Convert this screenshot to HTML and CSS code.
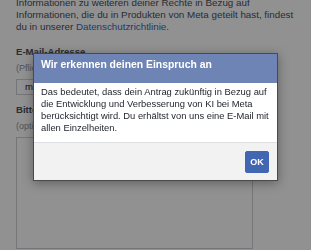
FILE: index.html
```html
<!DOCTYPE html>
<html lang="de">
<head>
<meta charset="utf-8">
<title>Einspruch</title>
<link rel="stylesheet" href="styles.css">
</head>
<body>
<main class="page">
  <p class="intro">Informationen zu weiteren deiner Rechte in Bezug auf Informationen, die du in Produkten von Meta geteilt hast, findest du in unserer <a class="link" href="#">Datenschutzrichtlinie</a>.</p>
  <div class="field">
    <label class="label">E-Mail-Adresse</label>
    <div class="hint">(Pflichtfeld)</div>
    <div class="input">max.mustermann@example.com</div>
  </div>
  <div class="field">
    <label class="label">Bitte erkläre, wie sich das auswirkt.</label>
    <div class="hint">(optional)</div>
    <div class="textarea"></div>
  </div>
</main>
<div class="overlay"></div>
<div class="dialog" role="dialog">
  <div class="dialog-header">Wir erkennen deinen Einspruch an</div>
  <div class="dialog-body">Das bedeutet, dass dein Antrag zukünftig in Bezug auf die Entwicklung und Verbesserung von KI bei Meta berücksichtigt wird. Du erhältst von uns eine E-Mail mit allen Einzelheiten.</div>
  <div class="dialog-footer"><button class="btn-ok">OK</button></div>
</div>
</body>
</html>
```
FILE: styles.css
```css
html, body {
  margin: 0;
  padding: 0;
  background: #ffffff;
  overflow: hidden;
  height: 250px;
}
body {
  font-family: "Liberation Sans", Arial, sans-serif;
  color: #4b4f56;
}
.page {
  padding: 0 16px;
  margin-top: -3px;
  width: 280px;
}
.intro {
  margin: 0;
  font-size: 9.8px;
  line-height: 12px;
}
.link {
  color: #4267b2;
  text-decoration: none;
}
.field {
  display: flex;
  flex-direction: column;
  width: 237px;
}
.field:first-of-type {
  margin-top: 13px;
}
.label {
  font-weight: bold;
  font-size: 9.6px;
  line-height: 12px;
  white-space: nowrap;
  overflow: hidden;
  color: #4b4f56;
}
.hint {
  font-size: 9px;
  line-height: 12px;
  margin-top: 4px;
  color: #90949c;
}
.input {
  margin-top: 5px;
  height: 14px;
  border: 1px solid #ccd0d5;
  font-size: 9.6px;
  line-height: 14px;
  padding: 0 8px;
  color: #1d2129;
  white-space: nowrap;
  overflow: hidden;
}
.field + .field {
  margin-top: 9px;
}
.textarea {
  margin-top: 5px;
  height: 110px;
  border: 1px solid #ccd0d5;
}
.overlay {
  position: fixed;
  inset: 0;
  background: rgba(0, 0, 0, 0.43);
}
.dialog {
  position: absolute;
  left: 33px;
  top: 53px;
  width: 243px;
  border: 1px solid #4a4a4a;
  background: #ffffff;
  box-shadow: 0 2px 10px rgba(0, 0, 0, 0.35);
}
.dialog-header {
  height: 29px;
  box-sizing: border-box;
  padding: 3px 7px 0;
  background: #6d84b4;
  color: #ffffff;
  font-weight: bold;
  font-size: 10.4px;
  line-height: 15px;
}
.dialog-body {
  padding: 3px 6px 8px 7px;
  font-size: 9.4px;
  line-height: 12px;
  color: #1d2129;
}
.dialog-footer {
  display: flex;
  justify-content: flex-end;
  padding: 8px 8px 7px;
  background: #f2f2f2;
  border-top: 1px solid #dddfe2;
}
.btn-ok {
  width: 24px;
  height: 22px;
  padding: 0;
  border: 1px solid #4267b2;
  border-radius: 2px;
  background: #4267b2;
  color: #ffffff;
  font-family: "Liberation Sans", Arial, sans-serif;
  font-weight: bold;
  font-size: 9px;
}
```
